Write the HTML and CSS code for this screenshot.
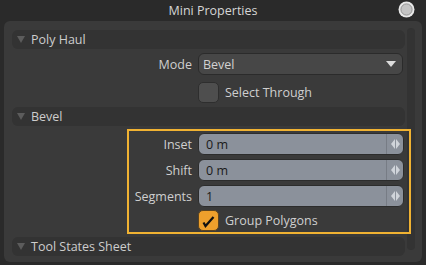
FILE: index.html
```html
<!DOCTYPE html>
<html lang="en">
<head>
    <meta charset="UTF-8">
    <title>Mini Properties</title>
    <link rel="stylesheet" href="styles.css">
</head>
<body>
    <div class="titlebar">
        <span class="title">Mini Properties</span>
        <svg class="title-icon" width="17" height="17" viewBox="0 0 17 17">
            <circle cx="8.5" cy="8.5" r="8" fill="#e8e8e8"/>
            <circle cx="8.5" cy="8.5" r="5.6" fill="#c4c4c4" stroke="#8c8c8c" stroke-width="0.9"/>
        </svg>
    </div>

    <div class="panel">
        <div class="content">
            <div class="section-head"><span class="tri"></span>Poly Haul</div>

            <div class="row row-mode">
                <label class="label">Mode</label>
                <div class="dropdown">
                    <span>Bevel</span>
                    <span class="drop-arrow"></span>
                </div>
            </div>
            <div class="row">
                <span class="label"></span>
                <div class="check"></div>
                <span class="check-text">Select Through</span>
            </div>

            <div class="section-head head-bevel"><span class="tri"></span>Bevel</div>

            <div class="row">
                <label class="label">Inset</label>
                <div class="field">
                    <span class="value">0 m</span>
                    <span class="spin"><span class="al"></span><span class="ar"></span></span>
                </div>
            </div>
            <div class="row">
                <label class="label">Shift</label>
                <div class="field">
                    <span class="value">0 m</span>
                    <span class="spin"><span class="al"></span><span class="ar"></span></span>
                </div>
            </div>
            <div class="row row-seg">
                <label class="label">Segments</label>
                <div class="field">
                    <span class="value">1</span>
                    <span class="spin"><span class="al"></span><span class="ar"></span></span>
                </div>
            </div>
            <div class="row row-check">
                <span class="label"></span>
                <div class="check checked">
                    <svg width="21" height="21" viewBox="0 0 21 21">
                        <path d="M5.5 12.5 L7.5 16 L15.5 7" fill="none" stroke="#111" stroke-width="2.2" stroke-linejoin="miter"/>
                    </svg>
                </div>
                <span class="check-text">Group Polygons</span>
            </div>

            <div class="section-head"><span class="tri"></span>Tool States Sheet</div>

            <!-- highlight around the bevel controls -->
            <div class="highlight"></div>
        </div>
        <div class="scrollbar"></div>
    </div>
</body>
</html>
```

FILE: styles.css
```css
body {
    margin: 0;
    width: 426px;
    height: 265px;
    background-color: #2a2a2a;
    font-family: "Open Sans", "Noto Sans", sans-serif;
    font-size: 12.5px;
    color: #cfcfcf;
    overflow: hidden;
}
.titlebar {
    height: 21px;
    display: flex;
    align-items: center;
    justify-content: center;
    position: relative;
}
.title {
    color: #d6d6d6;
}
.title-icon {
    position: absolute;
    right: 11px;
    top: 1px;
}
.panel {
    margin: 0 4px;
    height: 241px;
    background-color: #3a3a3a;
    border-radius: 6px;
    display: flex;
    padding: 9px 7px 0 8px;
    box-sizing: border-box;
    gap: 2px;
}
.content {
    flex: 1;
    position: relative;
}
.scrollbar {
    width: 8px;
    height: 222px;
    margin-top: -2px;
    background-color: #333333;
    border-radius: 4px;
}
.section-head {
    height: 19px;
    background-color: #333333;
    border-radius: 6px;
    display: flex;
    align-items: center;
    color: #cdcdcd;
    margin-bottom: 4px;
}
.head-bevel {
    margin-bottom: 7px;
}
.tri {
    width: 0;
    height: 0;
    border-left: 4px solid transparent;
    border-right: 4px solid transparent;
    border-top: 7px solid #5c5c5c;
    margin: 0 6px 0 5px;
}
.row {
    display: flex;
    align-items: center;
    height: 22px;
    margin-bottom: 4px;
}
.row-mode {
    margin-bottom: 6px;
}
.row-seg {
    margin-bottom: 3px;
}
.row-check {
    height: 21px;
    margin-bottom: 6px;
}
.label {
    width: 180px;
    text-align: right;
    margin-right: 6px;
    color: #cfcfcf;
}
.dropdown {
    width: 205px;
    height: 22px;
    box-sizing: border-box;
    border: 1px solid #2b2b2b;
    border-radius: 6px;
    background-color: #474747;
    display: flex;
    align-items: center;
    justify-content: space-between;
    padding: 0 6px 0 4px;
    color: #d2d2d2;
}
.drop-arrow {
    width: 0;
    height: 0;
    border-left: 5px solid transparent;
    border-right: 5px solid transparent;
    border-top: 6px solid #dcdcdc;
}
.check {
    width: 21px;
    height: 21px;
    box-sizing: border-box;
    border: 1px solid #2e2e2e;
    border-radius: 5px;
    background-color: #4e4e4e;
    margin-right: 6px;
}
.check.checked {
    background-color: #eea02c;
    border-color: #5a4320;
}
.check svg {
    display: block;
    margin: -1px;
}
.check-text {
    color: #cfcfcf;
}
.field {
    width: 206px;
    height: 22px;
    box-sizing: border-box;
    border: 1px solid #2c2c2c;
    border-radius: 6px;
    background-color: #8b919b;
    display: flex;
    align-items: center;
    color: #1a1a1a;
}
.value {
    flex: 1;
    padding-left: 7px;
}
.spin {
    width: 16px;
    height: 100%;
    border-left: 1px solid #777c85;
    display: flex;
    align-items: center;
    justify-content: center;
    gap: 1px;
}
.al, .ar {
    width: 0;
    height: 0;
    border-top: 5px solid transparent;
    border-bottom: 5px solid transparent;
}
.al {
    border-right: 4px solid #d0d4da;
}
.ar {
    border-left: 4px solid #d0d4da;
}
.highlight {
    position: absolute;
    left: 115px;
    top: 99px;
    width: 284px;
    height: 105px;
    box-sizing: border-box;
    border: 2px solid #f0b232;
}
```
